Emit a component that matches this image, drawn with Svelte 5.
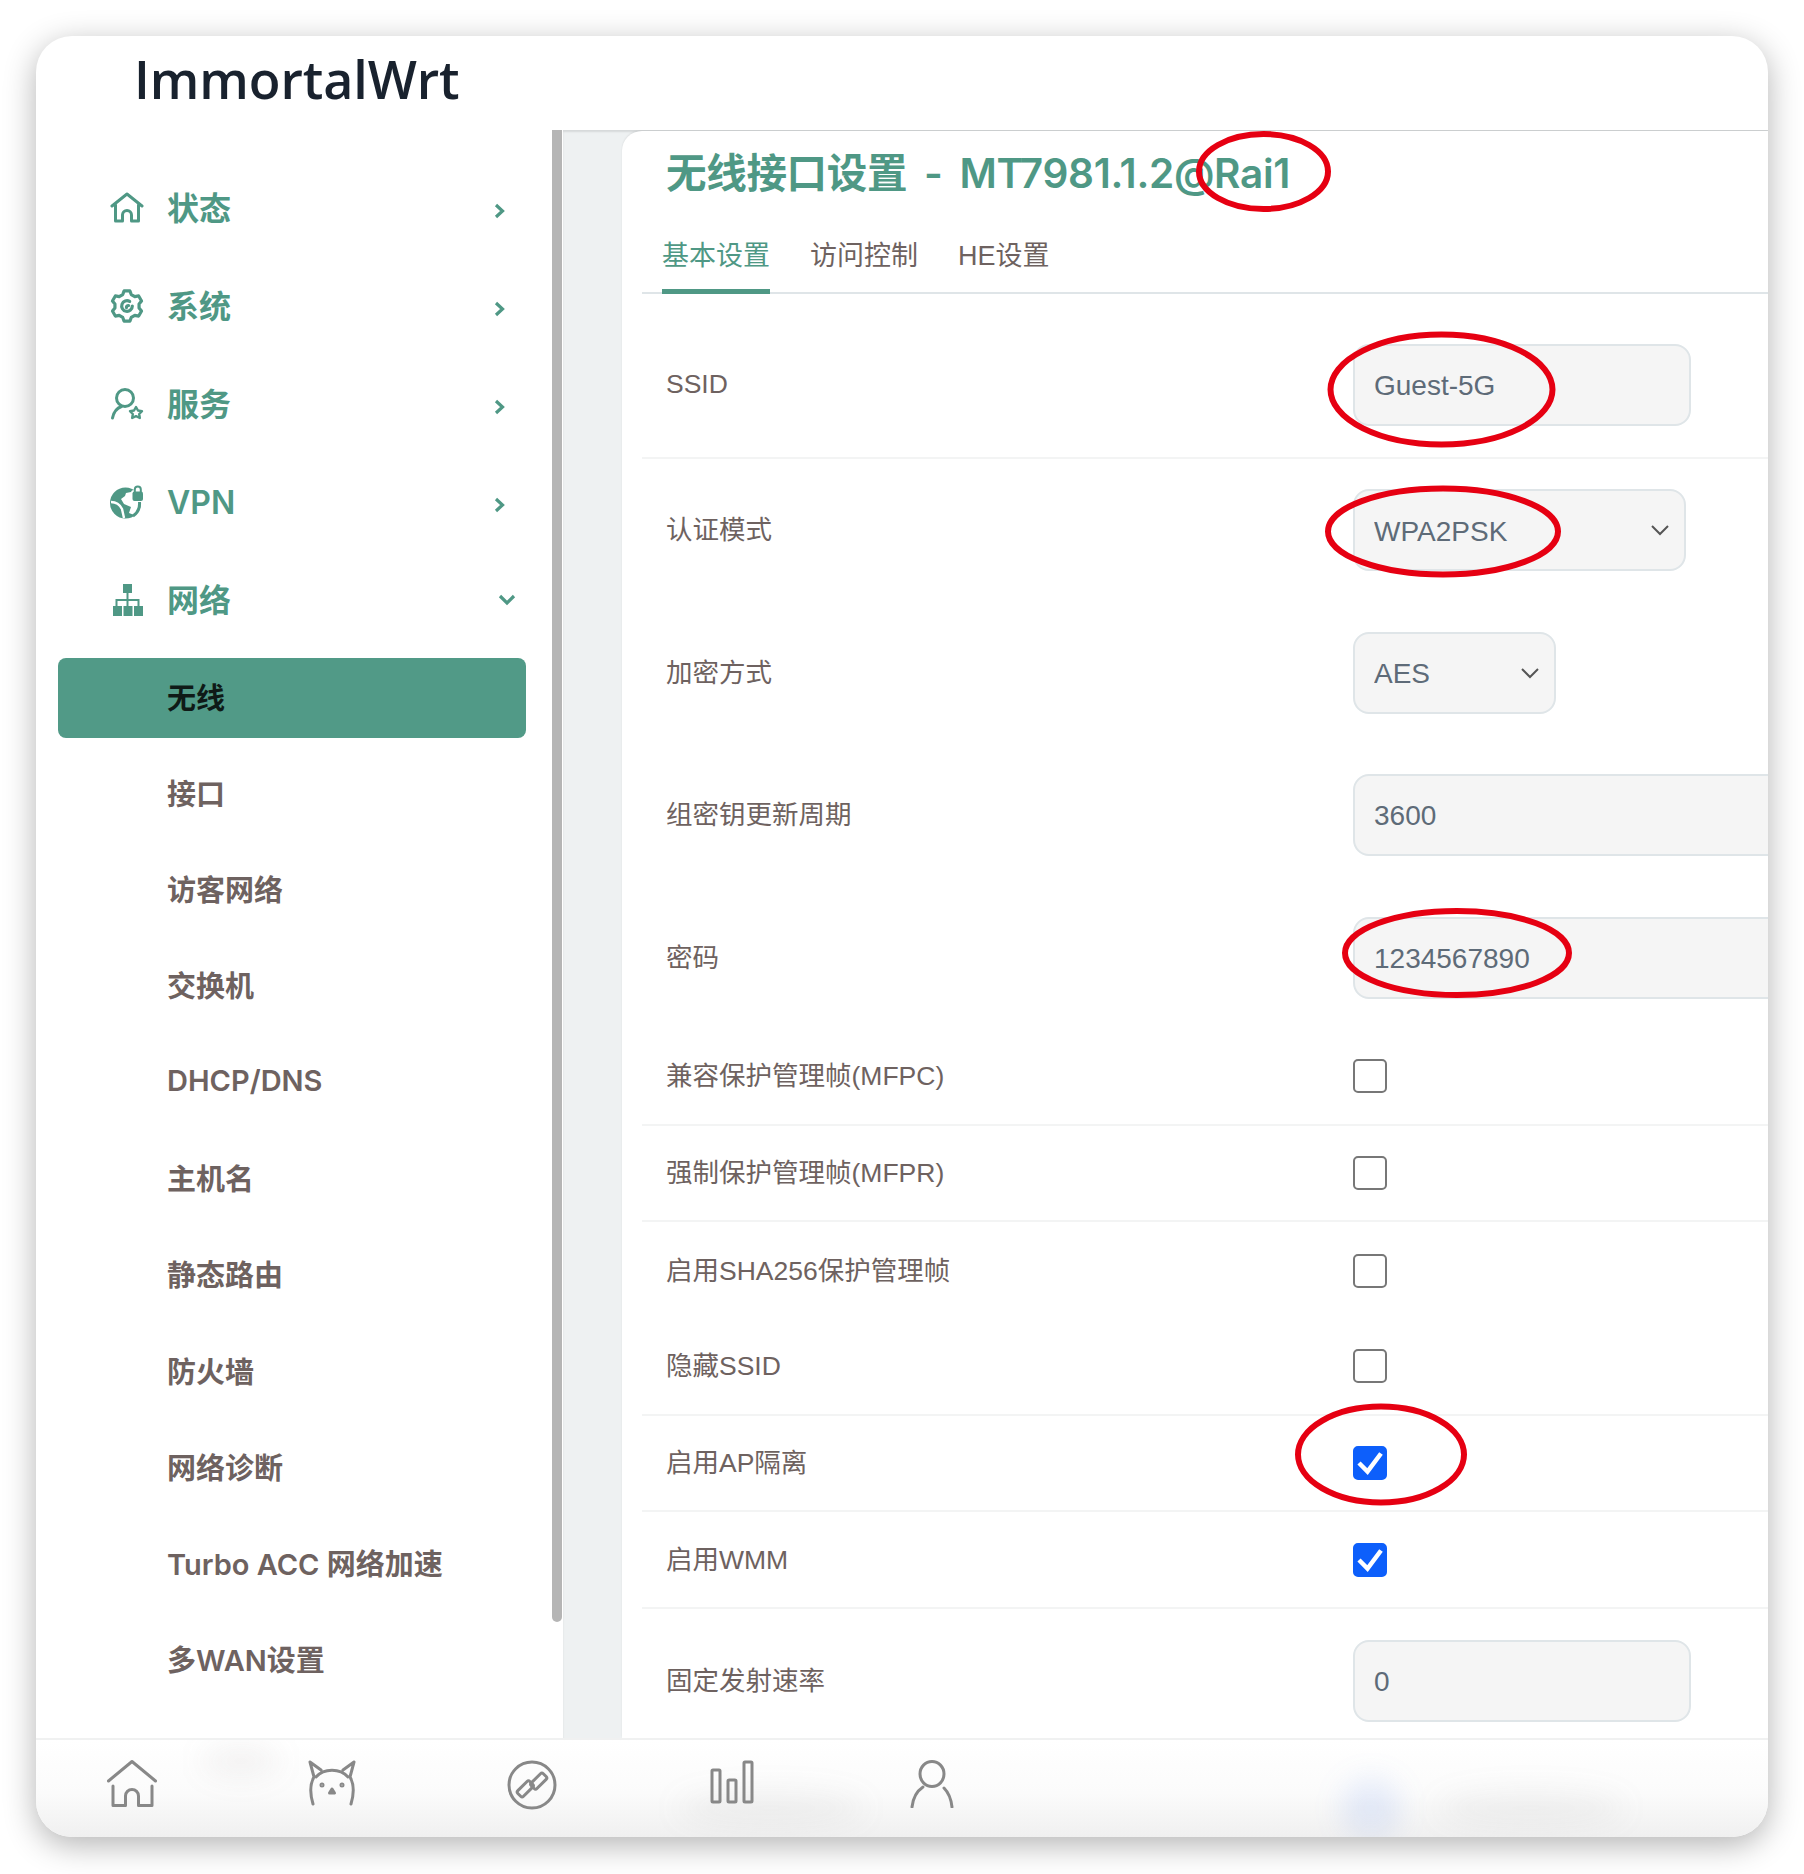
<script>
  const top = [
    { name: '状态', icon: 'home' },
    { name: '系统', icon: 'gear' },
    { name: '服务', icon: 'user' },
    { name: 'VPN', icon: 'globe' },
    { name: '网络', icon: 'net', open: true }
  ];
  const subs = ['无线', '接口', '访客网络', '交换机', 'DHCP/DNS', '主机名', '静态路由', '防火墙', '网络诊断', 'Turbo ACC 网络加速', '多WAN设置'];
  const rows = [
    { label: 'SSID', kind: 'input', value: 'Guest-5G', cls: 'first line', w: 'w338' },
    { label: '认证模式', kind: 'select', value: 'WPA2PSK', cls: 'tall', w: 'w333' },
    { label: '加密方式', kind: 'select', value: 'AES', cls: 'tall', w: 'w203' },
    { label: '组密钥更新周期', kind: 'input', value: '3600', cls: 'tall', w: 'wide' },
    { label: '密码', kind: 'input', value: '1234567890', cls: 'tall', w: 'wide' },
    { label: '兼容保护管理帧(MFPC)', kind: 'check', cls: 'chk line' },
    { label: '强制保护管理帧(MFPR)', kind: 'check', cls: 'chk line' },
    { label: '启用SHA256保护管理帧', kind: 'check', cls: 'chk' },
    { label: '隐藏SSID', kind: 'check', cls: 'chk line' },
    { label: '启用AP隔离', kind: 'check', checked: true, cls: 'chk line' },
    { label: '启用WMM', kind: 'check', checked: true, cls: 'chk line' },
    { label: '固定发射速率', kind: 'input', value: '0', cls: 'last', w: 'w338' }
  ];
  const marks = [
    [1263.5, 171.5, 64.5, 37.5],
    [1441.5, 389.5, 111, 55],
    [1443, 531.5, 115, 43],
    [1457, 953, 112, 42],
    [1381, 1454.5, 83, 48]
  ];
  const gearPath = (() => {
    let d = '';
    const n = 6;
    for (let i = 0; i < n; i++) {
      const a = (i / n) * Math.PI * 2 - Math.PI / 2;
      const s = Math.PI / n;
      const p = (r, t) => `${(16 + r * Math.cos(t)).toFixed(2)} ${(16 + r * Math.sin(t)).toFixed(2)}`;
      d += `${i ? 'L' : 'M'}${p(11.5, a - s * 0.68)} L${p(14.5, a - s * 0.36)} L${p(14.5, a + s * 0.36)} L${p(11.5, a + s * 0.68)} `;
    }
    return d + 'Z';
  })();
</script>

<div class="page">
  <div class="card">
    <header class="head"><span class="logo">ImmortalWrt</span></header>
    <div class="body">
      <nav class="side">
        {#each top as t}
          <div class="top">
            <span class="ico">
              {#if t.icon === 'home'}
                <svg width="34" height="32" viewBox="0 0 34 32" fill="none" stroke="#4f9885" stroke-width="3" stroke-linecap="round" stroke-linejoin="round"><path d="M2 14 17 2l15 12"/><path d="M5.500 13V29H12.500V23a4.500 4.500 0 0 1 9 0V29H28.500V13"/></svg>
              {:else if t.icon === 'gear'}
                <svg width="34" height="34" viewBox="0 0 32 32" fill="none" stroke="#4f9885" stroke-width="3" stroke-linejoin="round" stroke-linecap="round"><path d={gearPath}/><path d="M21 16a5 5 0 1 1-2.500-4.300"/><path d="M15.500 17.500a2 2 0 0 1 2-2"/></svg>
              {:else if t.icon === 'user'}
                <svg width="34" height="34" viewBox="0 0 34 34" fill="none" stroke="#4f9885" stroke-width="3" stroke-linecap="round" stroke-linejoin="round"><circle cx="15" cy="11" r="8.500"/><path d="M2.500 31c1.200-6 4.500-10 9-11.500"/><path d="m26 20 2 3.500 4 .7-2.800 2.800.6 4-3.800-1.800-3.800 1.800.6-4-2.800-2.800 4-.7z" stroke-width="2.400"/></svg>
              {:else if t.icon === 'globe'}
                <svg width="36" height="34" viewBox="0 0 36 34"><circle cx="15.500" cy="18" r="15.500" fill="#4f9885"/><path d="M16 8 26 6l5 8-1 10-6 6-5-2 2-6-7-3-3-5 4-3z" fill="#fff"/><path d="M29.500 17c.5 6-2 11-6.500 14" fill="none" stroke="#4f9885" stroke-width="3"/><path d="M1 17c5 0 9 3 11 7l2 9" fill="none" stroke="#fff" stroke-width="2.400"/><rect x="21" y="5" width="13" height="12" rx="3" fill="#fff"/><rect x="22.500" y="6.500" width="10.500" height="9.500" rx="2" fill="#4f9885"/><path d="M24.800 7V4.500a3 3 0 0 1 6 0V7" fill="none" stroke="#4f9885" stroke-width="2"/></svg>
              {:else}
                <svg class="neticon" width="34" height="34" viewBox="0 0 34 34" fill="#4f9885"><rect x="12" y="1" width="9" height="9"/><rect x="2" y="23" width="9" height="10"/><rect x="12.500" y="23" width="9" height="10"/><rect x="23" y="23" width="9" height="10"/><path d="M15.500 10h2v6h11v7h-2v-5h-9v5h-2v-5h-9v5h-2v-7h11z"/></svg>
              {/if}
            </span>
            <span class="top-name">{t.name}</span>
            {#if t.open}
              <svg class="chev down" width="18" height="12" viewBox="0 0 18 12" fill="none" stroke="#4f9885" stroke-width="3.200"><path d="m2 2 7 7 7-7"/></svg>
            {:else}
              <svg class="chev" width="12" height="18" viewBox="0 0 12 18" fill="none" stroke="#4f9885" stroke-width="3.200"><path d="m2 3 6.500 6L2 15"/></svg>
            {/if}
          </div>
        {/each}
        <div class="subs">
          {#each subs as s, i}
            <div class="sub" class:active={i === 0}>{s}</div>
          {/each}
        </div>
      </nav>
      <div class="scroll"><div class="thumb"></div></div>
      <main class="main">
        <section class="panel">
          <h2 class="title">无线接口设置 - MT7981.1.2@Rai1</h2>
          <div class="tabs">
            <span class="tab on">基本设置</span>
            <span class="tab">访问控制</span>
            <span class="tab">HE设置</span>
          </div>
          {#each rows as r}
            <div class="row {r.cls}">
              <div class="label">{r.label}</div>
              {#if r.kind === 'input'}
                <input class="field {r.w}" value={r.value} />
              {:else if r.kind === 'select'}
                <div class="sel {r.w}">
                  <select class="field"><option>{r.value}</option></select>
                  <svg class="sel-chev" width="20" height="12" viewBox="0 0 20 12" fill="none" stroke="#555" stroke-width="2"><path d="m2 2 8 8 8-8"/></svg>
                </div>
              {:else}
                <span class="box" class:checked={r.checked}>
                  {#if r.checked}
                    <svg width="34" height="34" viewBox="0 0 34 34" fill="none" stroke="#fff" stroke-width="4.500"><path d="m6 17 8.500 8.500L28 7.500"/></svg>
                  {/if}
                </span>
              {/if}
            </div>
          {/each}
        </section>
      </main>
    </div>
    <footer class="foot">
      <span class="glow g1"></span><span class="glow g2"></span><span class="glow g3"></span><span class="glow g4"></span>
      <span class="fi"><svg width="50" height="47" viewBox="0 0 50 47" fill="none" stroke="#888" stroke-width="3" stroke-linecap="round" stroke-linejoin="round"><path d="M1.500 21 25 1.500 48.500 21"/><path d="M6 26V45.500H18.500V36a6.500 6.500 0 0 1 13 0V45.500H45V26"/></svg></span>
      <span class="fi"><svg width="50" height="46" viewBox="0 0 50 46" fill="none" stroke="#888" stroke-width="3" stroke-linecap="round" stroke-linejoin="round"><path d="M6 44C3 34 3 24 7 17L3 2l11 8M47 2l-4 15c4 7 4 17 1 27M36 10 47 2M9 17c8-9 24-9 32 0"/><circle cx="15" cy="25" r="1" /><circle cx="35" cy="25" r="1"/><path d="m25 29 2.500 4h-5z" fill="#888"/></svg></span>
      <span class="fi"><svg width="50" height="50" viewBox="0 0 50 50" fill="none" stroke="#888" stroke-width="3"><circle cx="25" cy="25" r="23"/><g transform="rotate(-45 25 25)"><rect x="9" y="19" width="17" height="8" rx="2"/><rect x="24" y="23" width="17" height="8" rx="2"/></g></svg></span>
      <span class="fi"><svg width="44" height="44" viewBox="0 0 44 44" fill="none" stroke="#888" stroke-width="3"><rect x="2" y="10" width="8" height="32" rx="1"/><rect x="18" y="20" width="8" height="22" rx="1"/><rect x="34" y="2" width="8" height="40" rx="1"/></svg></span>
      <span class="fi"><svg width="44" height="48" viewBox="0 0 44 48" fill="none" stroke="#888" stroke-width="3" stroke-linecap="round"><ellipse cx="22" cy="14" rx="12" ry="12.500"/><path d="M2 47c1-9 5-16 11-20M42 47c-1-9-4-15-8-19"/></svg></span>
    </footer>
  </div>
  <svg class="marks" width="1804" height="1874" viewBox="0 0 1804 1874" fill="none" stroke="#e60012" stroke-width="6">
    {#each marks as m}
      <ellipse cx={m[0]} cy={m[1]} rx={m[2]} ry={m[3]} />
    {/each}
  </svg>
</div>

<style>
  :global(body) { margin: 0; background: #fff; }
  .page {
    position: relative;
    width: 1804px;
    height: 1874px;
    padding: 36px;
    box-sizing: border-box;
    font-family: "Liberation Sans", "Noto Sans CJK SC", sans-serif;
    overflow: hidden;
  }
  .card {
    position: relative;
    width: 1732px;
    height: 1801px;
    background: #fff;
    border-radius: 36px;
    box-shadow: 0 8px 32px rgba(0, 0, 0, 0.3);
    display: flex;
    flex-direction: column;
    overflow: hidden;
  }
  .head {
    height: 94px;
    flex: none;
    display: flex;
    align-items: center;
    padding-left: 98px;
    box-sizing: border-box;
  }
  .logo {
    font: 600 52px "Open Sans", sans-serif;
    letter-spacing: -0.1px;
    color: #19222e;
    position: relative;
    top: -5px;
  }
  .body { flex: 1; display: flex; min-height: 0; }
  .side { width: 516px; flex: none; padding-top: 29px; box-sizing: border-box; overflow: hidden; }
  .top {
    position: relative;
    height: 98px;
    display: flex;
    align-items: center;
    padding-left: 74px;
    color: #4f9885;
    font-family: "Inter", "Noto Sans CJK SC", sans-serif;
    font-size: 32px;
    font-weight: 600;
  }
  .ico { width: 57px; display: flex; align-items: center; flex: none; }
  .neticon { margin-left: 1px; }
  .top-name { line-height: 1; padding-top: 2px; }
  .chev { position: absolute; left: 458px; top: 43px; }
  .chev.down { left: 462px; top: 43px; }
  .subs { padding-top: 9px; display: flex; flex-direction: column; gap: 16.300px; }
  .sub {
    height: 80px;
    margin-left: 22px;
    width: 468px;
    border-radius: 8px;
    display: flex;
    align-items: center;
    padding: 0 0 5px 109px;
    box-sizing: border-box;
    font-family: "Inter", "Noto Sans CJK SC", sans-serif;
    font-size: 29px;
    font-weight: 600;
    color: #6e6260;
    flex: none;
  }
  .sub.active { background: #519a87; color: #0f1a17; }
  .scroll { width: 10.500px; flex: none; }
  .thumb { width: 10px; height: 1492px; background: #b5b5b5; border-radius: 0 0 5px 5px; }
  .main {
    flex: 1;
    min-width: 0;
    background: #eef1f2;
    padding: 1px 0 0 59.500px;
    overflow: hidden;
    box-shadow: inset 0 2px 2px rgba(0, 0, 0, 0.1);
  }
  .panel {
    background: #fff;
    border-radius: 20px 0 0 0;
    padding-left: 20px;
    height: 100%;
    box-shadow: 0 -1px 2px rgba(0, 0, 0, 0.08);
  }
  .title {
    margin: 0;
    height: 86px;
    padding-left: 24px;
    font-family: "Inter", "Noto Sans CJK SC", sans-serif;
    font-size: 40.500px;
    line-height: 86px;
    font-weight: 600;
    letter-spacing: -0.3px;
    word-spacing: 7px;
    color: #4f9885;
    white-space: nowrap;
  }
  .tabs {
    height: 77px;
    box-sizing: border-box;
    border-bottom: 2px solid #dfe5e8;
    display: flex;
    gap: 40px;
    padding-left: 20px;
  }
  .tab {
    height: 77px;
    box-sizing: border-box;
    padding-top: 20px;
    font-size: 27px;
    line-height: 38px;
    color: #6e6260;
  }
  .tab.on { color: #4f9885; border-bottom: 5px solid #4f9885; }
  .row {
    display: flex;
    align-items: center;
    padding-left: 24px;
    box-sizing: border-box;
    font-size: 26.500px;
    color: #6e6260;
  }
  .line { border-bottom: 2px solid #f3f4f4; }
  .first { height: 165px; padding-top: 18px; }
  .tall { height: 142.500px; }
  .chk { height: 96.700px; }
  .last { height: 130px; padding-top: 13px; }
  .label { width: 687px; flex: none; white-space: nowrap; margin-bottom: 5px; }
  .first .label { margin-bottom: 0; }
  .field {
    height: 82px;
    box-sizing: border-box;
    background: #f5f5f5;
    border: 2px solid #dfe5e8;
    border-radius: 16px;
    padding: 2px 0 0 19px;
    margin: 0;
    font: 28px "Liberation Sans", "Noto Sans CJK SC", sans-serif;
    color: #5e6b78;
    outline: none;
    flex: none;
    appearance: none;
  }
  .w338 { width: 338px; }
  .wide { width: 700px; }
  .sel { position: relative; flex: none; }
  .sel .field { width: 100%; display: block; }
  .w333 { width: 333px; }
  .w203 { width: 203px; }
  .sel-chev { position: absolute; right: 16px; top: 35px; }
  .box {
    width: 34px;
    height: 34px;
    box-sizing: border-box;
    border: 2px solid #777;
    border-radius: 5px;
    background: #fff;
    flex: none;
    display: block;
    position: relative;
  }
  .box svg { position: absolute; left: -2px; top: -2px; }
  .box.checked { background: #0d5ffb; border-color: #0d5ffb; }
  .foot {
    position: relative;
    height: 99px;
    flex: none;
    display: flex;
    gap: 10px;
    padding: 20px 0 0 1px;
    box-sizing: border-box;
    border-top: 2px solid #f0f1f1;
    background: linear-gradient(#fff 0%, #fbfbfb 55%, #f0f0f0 100%);
    overflow: hidden;
  }
  .fi { width: 190px; display: flex; justify-content: center; align-items: flex-start; position: relative; }
  .glow { position: absolute; border-radius: 50%; filter: blur(14px); }
  .g1 { left: 165px; top: 4px; width: 80px; height: 34px; background: rgba(120, 105, 105, 0.07); }
  .g2 { left: 1305px; top: 38px; width: 60px; height: 60px; background: rgba(70, 120, 240, 0.12); }
  .g3 { left: 1400px; top: 50px; width: 190px; height: 36px; background: rgba(120, 110, 110, 0.07); }
  .g4 { left: 640px; top: 50px; width: 190px; height: 36px; background: rgba(120, 110, 110, 0.07); }
  .marks { position: absolute; left: 0; top: 0; pointer-events: none; }
</style>
